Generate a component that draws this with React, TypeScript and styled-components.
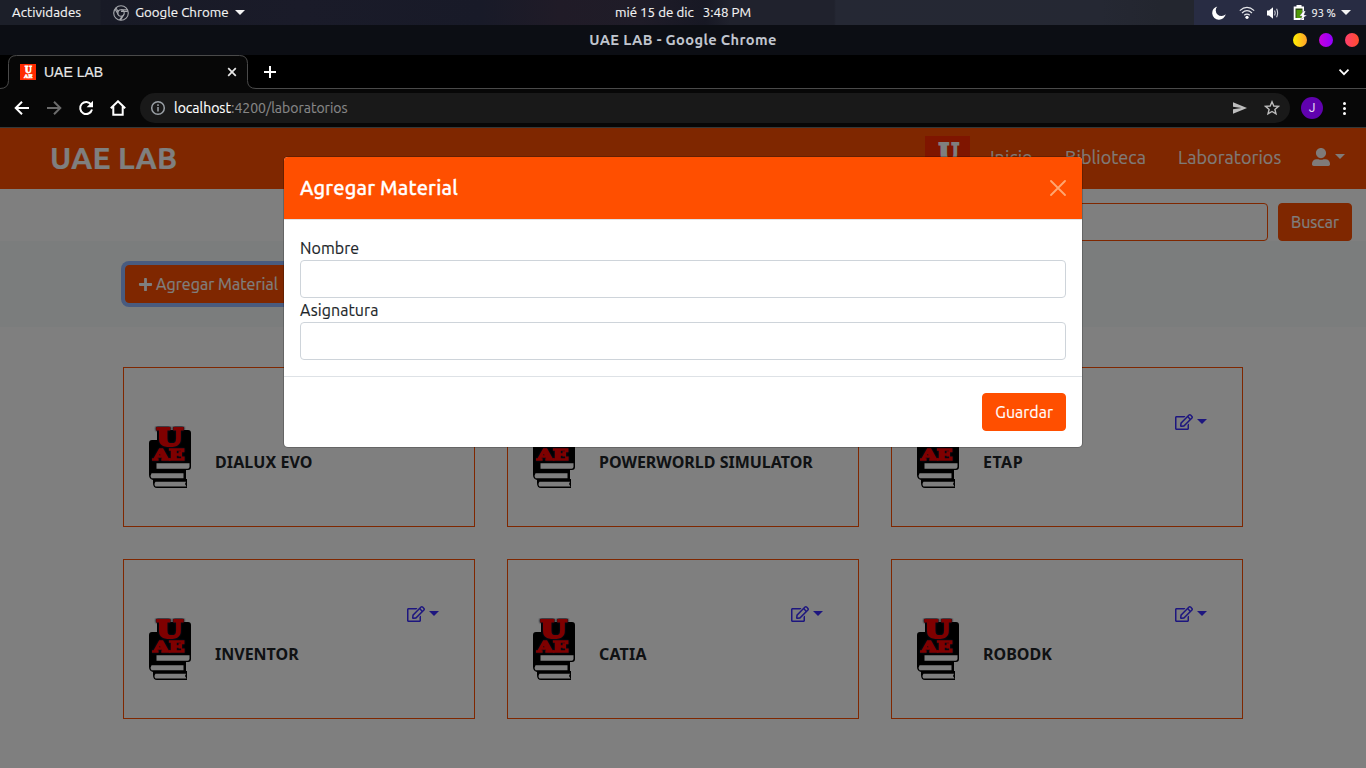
import React from 'react';
import styled, { createGlobalStyle } from 'styled-components';
import { FaPlus, FaRegEdit, FaUserAlt } from 'react-icons/fa';

const ORANGE = '#ff4f00';

const GlobalStyle = createGlobalStyle`
  *, *::before, *::after { box-sizing: border-box; }
  body { margin: 0; background: #000; font-family: Ubuntu, 'Noto Sans', sans-serif; font-size: 16px; line-height: 24px; overflow: hidden; }
  svg { display: block; flex: none; }
`;

const Screen = styled.div`
  width: 1366px;
  height: 768px;
  display: flex;
  flex-direction: column;
  overflow: hidden;
`;

const Label = styled.span<{ $track?: number; $weight?: number }>`
  letter-spacing: ${p => p.$track ?? 0}px;
  -webkit-text-stroke: ${p => p.$weight ?? 0.15}px currentColor;
  white-space: pre;
`;

/* Desktop panel */

const Panel = styled.header`
  flex: none;
  height: 25px;
  display: grid;
  grid-template-columns: 1fr auto 1fr;
  align-items: stretch;
  color: #f4f4f4;
  font-size: 13.33px;
  line-height: 24px;
  background: linear-gradient(90deg, #1c1f29 0, #1c1f29 100px, #181a26 101px, #1a1b29 300px, #181a28 480px, #201b27 560px, #1f1c28 640px, #171824 705px, #20222d 730px, #20222d 834px, #252834 836px, #252833 1100px, #23262f 1160px, #23262f 100%);
`;

const PanelLeft = styled.div`
  display: flex;
  align-items: center;
  padding-left: 12px;
`;

const AppMenu = styled.div`
  display: flex;
  align-items: center;
  margin-left: 32px;
  gap: 6px;
`;

const Clock = styled.div`
  display: flex;
  align-items: center;
  gap: 9px;
`;

const Tray = styled.div`
  justify-self: end;
  width: 172px;
  padding-left: 18px;
  display: flex;
  align-items: center;
  gap: 12.5px;
  background: #282c43;
`;

const Battery = styled.div`
  display: flex;
  align-items: center;
  gap: 5px;
  font-size: 11px;
`;

const Triangle = styled.i<{ $size: number }>`
  width: 0;
  height: 0;
  flex: none;
  border-top: ${p => p.$size}px solid currentColor;
  border-left: ${p => p.$size}px solid transparent;
  border-right: ${p => p.$size}px solid transparent;
`;

/* Browser window */

const TitleBar = styled.div`
  flex: none;
  height: 30px;
  padding-right: 7px;
  padding-left: 7px;
  display: grid;
  grid-template-columns: 1fr auto 1fr;
  align-items: center;
  background: #0c0e14;
  color: #c0c5ce;
  font-size: 14.67px;
  font-weight: 700;
`;

const WindowTitle = styled.div`
  grid-column: 2;
`;

const WindowButtons = styled.div`
  justify-self: end;
  display: flex;
  gap: 12px;
`;

const Dot = styled.span<{ $from: string; $to: string }>`
  width: 14px;
  height: 14px;
  border-radius: 50%;
  background: linear-gradient(90deg, ${p => p.$from}, ${p => p.$to});
`;

const TabStrip = styled.div`
  flex: none;
  height: 34px;
  display: flex;
  background: #000;
`;

const Tab = styled.div`
  position: relative;
  width: 256px;
  padding: 0 18px 0 20px;
  display: flex;
  align-items: center;
  font: 14px/24px 'Liberation Sans', sans-serif;
  color: #e8e8e8;

  > * { position: relative; }
  > ${Label} { margin-left: 8px; flex: 1; }
`;

const TabOutline = styled.svg`
  && { position: absolute; left: 0; top: 0; }
`;

const StripRest = styled.div`
  flex: 1;
  display: flex;
  align-items: center;
  justify-content: space-between;
  padding: 0 16px 0 7px;
  border-bottom: 1px solid #4a4a4a;
`;

const Toolbar = styled.div`
  flex: none;
  height: 39px;
  padding: 0 15px 0 14px;
  display: flex;
  align-items: center;
  background: #070707;
  border-bottom: 1px solid #353838;
`;

const NavButtons = styled.div`
  display: flex;
  gap: 16px;
`;

const Omnibox = styled.div`
  flex: none;
  width: 1150px;
  height: 30px;
  margin-left: 14px;
  padding: 0 10px;
  display: flex;
  align-items: center;
  border-radius: 15px;
  background: #191919;
  font-size: 14px;
  color: #878787;
`;

const Url = styled.div`
  flex: 1;
  margin-left: 8px;
`;

const Host = styled(Label)`
  color: #fff;
`;

const OmniActions = styled.div`
  display: flex;
  gap: 16px;
`;

const Avatar = styled.div`
  width: 22px;
  height: 22px;
  margin: 0 14px 0 11px;
  border-radius: 50%;
  display: flex;
  align-items: center;
  justify-content: center;
  background: #6002ae;
  color: #e9ddf3;
  font: 12px Roboto, sans-serif;
`;

/* Web page */

const Viewport = styled.div`
  position: relative;
  flex: 1;
  overflow: hidden;
  background: #fff;
  color: #212529;
`;

const Navbar = styled.nav`
  height: 61px;
  padding: 0 21px 0 50px;
  display: flex;
  align-items: center;
  justify-content: space-between;
  background: ${ORANGE};
  color: #fff;
`;

const Brand = styled.div`
  margin-bottom: 2px;
  font-size: 30.4px;
  font-weight: 700;
  line-height: 40px;
`;

const Links = styled.div`
  display: flex;
  align-items: center;
  font-size: 18px;
  color: rgba(255, 255, 255, 0.95);
`;

const NavLink = styled(Label)<{ $width: number }>`
  width: ${p => p.$width}px;
  margin-right: 30px;
  margin-bottom: 4px;
`;

const LogoSlot = styled.div`
  margin-right: 20px;
`;

const UserMenu = styled.div`
  display: flex;
  align-items: center;
  gap: 5px;
  margin-bottom: 4px;
`;

const SearchRow = styled.div`
  height: 52px;
  padding: 14px 14px 0;
  display: flex;
  justify-content: flex-end;
  gap: 10px;
`;

const SearchInput = styled.div`
  width: 360px;
  height: 38px;
  border: 1px solid ${ORANGE};
  border-radius: 4px;
`;

const Button = styled.button<{ $focused?: boolean }>`
  height: 38px;
  padding: 0 12px;
  border: 1px solid ${ORANGE};
  border-radius: 4px;
  display: flex;
  align-items: center;
  gap: 3px;
  background: ${ORANGE};
  color: #fff;
  font: inherit;
  box-shadow: ${p => (p.$focused ? '0 0 0 4px #92b6ff' : 'none')};
`;

const ActionBand = styled.section`
  height: 86px;
  padding: 24px 125px;
  display: flex;
  background: #f7fbfa;
`;

const CardGrid = styled.main`
  width: 1120px;
  margin: 40px auto 0;
  display: grid;
  grid-template-columns: repeat(3, 352px);
  gap: 32px;
`;

const Card = styled.article`
  height: 160px;
  padding: 45px 35px 0 25px;
  display: flex;
  align-items: flex-start;
  border: 1px solid ${ORANGE};
`;

const BookSlot = styled.div`
  flex: none;
  margin-top: 13px;
  width: 66px;
`;

const CardTitle = styled.h6`
  flex: 1;
  min-width: 0;
  margin: 37px 0 0;
  font: 700 16px/24px 'Noto Sans', sans-serif;
  white-space: nowrap;
`;

const EditMenu = styled.div`
  display: flex;
  gap: 4px;
  color: #3a2cff;

  > i { margin-top: 6px; }
`;

const Backdrop = styled.div`
  position: absolute;
  inset: 0;
  padding-top: 28px;
  background: rgba(0, 0, 0, 0.5);
`;

const Modal = styled.div`
  width: 800px;
  margin: 0 auto;
  border: 1px solid rgba(0, 0, 0, 0.2);
  border-radius: 5px;
  background: #fff;
  background-clip: padding-box;
  overflow: hidden;
`;

const ModalHeader = styled.div`
  height: 63px;
  padding: 0 16px;
  display: flex;
  align-items: center;
  justify-content: space-between;
  background: ${ORANGE};
  background-clip: padding-box;
  border-bottom: 1px solid #dee2e6;
  color: #fff;
  font-size: 20px;
  font-weight: 500;
`;

const ModalBody = styled.div`
  padding: 16px;
  display: flex;
  flex-direction: column;
`;

const Field = styled.label`
  display: flex;
  flex-direction: column;
`;

const TextInput = styled.input`
  height: 38px;
  border: 1px solid #ced4da;
  border-radius: 4px;
  background: #fff;
`;

const ModalFooter = styled.div`
  padding: 16px;
  display: flex;
  justify-content: flex-end;
  border-top: 1px solid #dee2e6;
`;

const SLAB = "'DejaVu Serif', serif";

const Emblem = ({ size }: { size: number }) => (
  <svg width={size} height={size} viewBox="0 0 45 45">
    <rect width="45" height="45" fill="#ff2a00" />
    <g fill="#fff" stroke="#fff" fontFamily={SLAB} fontWeight="700">
      <text x="13.700" y="25" fontSize="24.500" strokeWidth="2.200" textLength="20" lengthAdjust="spacingAndGlyphs">U</text>
      <text x="11" y="38" fontSize="13" strokeWidth="1.500" textLength="24" lengthAdjust="spacingAndGlyphs">AE</text>
    </g>
  </svg>
);

const BookLetters = styled.g`
  fill: #f00;
  stroke: #f00;
  font-family: ${SLAB};
  font-weight: 700;
  filter: drop-shadow(0 0 0.8px #10162c) drop-shadow(0 0 0.5px #10162c);
`;

const Book = () => (
  <svg width="42" height="63" viewBox="0 0 42 63">
    <path d="M8 4h31q3 0 3 3v34q0 3-3 3h-2v9h1v9H8q-4 0-4-5v-3q-4-1-4-5V17q0-3 3-3h5z" fill="#000" />
    <path d="M7.500 37.300h33v3.400q0 2-2 2h-31z" fill="#fff" />
    <path d="M2.500 47.200h32v5h-32q-1.800-2.500 0-5z" fill="#fff" />
    <path d="M6.500 55.700h30.500l-1 2.300 1.500 2.600h-31q-2-2.400 0-4.900z" fill="#fff" />
    <BookLetters>
      <text x="7.500" y="19.700" fontSize="25" strokeWidth="2.200" textLength="26.500" lengthAdjust="spacingAndGlyphs">U</text>
      <text x="4.200" y="34" fontSize="14.500" strokeWidth="1.500" textLength="31.500" lengthAdjust="spacingAndGlyphs">AE</text>
    </BookLetters>
  </svg>
);

const ChromeIcon = () => (
  <svg width="16" height="16" viewBox="0 0 16 16" fill="none" stroke="#a5a7ac" strokeWidth="1.100">
    <circle cx="8" cy="8" r="7.300" />
    <circle cx="8" cy="8" r="3.200" />
    <path d="M8 4.800h6.500M5.200 9.600 2 4M10.800 9.600 7.600 15.200M2.900 2.800l2.500 4.400M8 6.400h6.800M9.200 11 6.500 15" />
  </svg>
);

const MoonIcon = () => (
  <svg width="14" height="14" viewBox="0 0 14 14" fill="#fff">
    <path d="M5.300.4A6.800 6.800 0 1 0 13.700 8.300 4.700 4.700 0 1 1 5.300.4z" />
  </svg>
);

const WifiIcon = () => (
  <svg width="16" height="14" viewBox="0 0 16 14" fill="none" stroke="#e6e7eb" strokeWidth="1.200">
    <path d="M.8 4.600Q8-1.800 15.200 4.600" />
    <path d="M3 7Q8 2.400 13 7" />
    <path d="M5.200 9.300Q8 6.900 10.800 9.300" />
    <circle cx="8" cy="11.300" r="1.600" fill="#fff" stroke="none" />
  </svg>
);

const VolumeIcon = () => (
  <svg width="13" height="12" viewBox="0 0 13 12">
    <path d="M0 3.500h2L6 .3v11.400L2 8.500H0z" fill="#fff" />
    <path d="M7.600 3.500q1.300 2.500 0 5M9.600 1.800q2 4.200 0 8.400" fill="none" stroke="#d0d2da" strokeWidth="1.100" />
  </svg>
);

const BatteryIcon = () => (
  <svg width="14" height="15" viewBox="0 0 14 15">
    <path d="M3.500 0h5v1.500H11V15H.7V1.500h2.800z" fill="#fff" />
    <path d="M2.500 3.500h7V13h-7z" fill="#2c4a12" />
    <path d="M3.500 5h5.500v8H3.500z" fill="#4e9a06" />
    <path d="m10.500 6-4 5H9L7.500 15 14 10h-3l1.500-4z" fill="#fff" stroke="#282c43" strokeWidth=".3" />
  </svg>
);

const line = { fill: 'none', stroke: '#fff', strokeWidth: 2 };

const BackIcon = ({ color }: { color: string }) => (
  <svg width="16" height="16" viewBox="0 0 16 16" {...line} stroke={color}>
    <path d="M15 8H2.500M8 1.700 1.700 8 8 14.300" />
  </svg>
);

const ForwardIcon = ({ color }: { color: string }) => (
  <svg width="16" height="16" viewBox="0 0 16 16" {...line} stroke={color}>
    <path d="M1 8h12.500M8 1.700 14.300 8 8 14.300" />
  </svg>
);

const ReloadIcon = () => (
  <svg width="16" height="16" viewBox="0 0 16 16">
    <path d="M13.200 4.700A6 6 0 1 0 14 9.500" {...line} />
    <path d="M15 .8v6.400H8.600z" fill="#fff" />
  </svg>
);

const HomeIcon = () => (
  <svg width="16" height="16" viewBox="0 0 16 16" {...line}>
    <path d="M.8 8.300 8 1.300l7.200 7M3.300 6.500v8.200h9.400V6.500" />
  </svg>
);

const InfoIcon = () => (
  <svg width="16" height="16" viewBox="0 0 16 16" fill="none" stroke="#9aa0a6" strokeWidth="1.500">
    <circle cx="8" cy="8" r="6.300" />
    <path d="M8 7v4.500M8 4.300v1.600" />
  </svg>
);

const SendIcon = () => (
  <svg width="16" height="16" viewBox="0 0 16 16" fill="#bdbdbd">
    <path d="M1 2.200 15 8 1 13.800V9.300L9.500 8 1 6.700z" />
  </svg>
);

const StarIcon = () => (
  <svg width="16" height="16" viewBox="0 0 16 16" fill="none" stroke="#bdbdbd" strokeWidth="1.400">
    <path d="m8 1.800 1.800 4.200 4.600.4-3.500 3 1.100 4.500L8 11.500l-4 2.400 1.100-4.500-3.500-3 4.600-.4z" />
  </svg>
);

const cards = [
  { title: 'DIALUX EVO', track: 0.1 },
  { title: 'POWERWORLD SIMULATOR', track: 0 },
  { title: 'ETAP', track: 0.5 },
  { title: 'INVENTOR', track: 0 },
  { title: 'CATIA', track: 0.2 },
  { title: 'ROBODK', track: 0 },
];

const Desktop = () => (
  <Panel>
    <PanelLeft>
      <Label $track={0.05}>Actividades</Label>
      <AppMenu>
        <ChromeIcon />
        <Label>Google Chrome</Label>
        <Triangle $size={5} />
      </AppMenu>
    </PanelLeft>
    <Clock>
      <Label>mié 15 de dic</Label>
      <Label>3:48 PM</Label>
    </Clock>
    <Tray>
      <MoonIcon />
      <WifiIcon />
      <VolumeIcon />
      <Battery>
        <BatteryIcon />
        <Label>93 %</Label>
        <Triangle $size={5} />
      </Battery>
    </Tray>
  </Panel>
);

const Browser = () => (
  <>
    <TitleBar>
      <WindowTitle><Label $track={0.35} $weight={0}>UAE LAB - Google Chrome</Label></WindowTitle>
      <WindowButtons>
        <Dot $from="#fff000" $to="#ffa02c" />
        <Dot $from="#c800dc" $to="#9000ff" />
        <Dot $from="#ff3f6e" $to="#ff4d2c" />
      </WindowButtons>
    </TitleBar>
    <TabStrip>
      <Tab>
        <TabOutline width="256" height="34" viewBox="0 0 256 34">
          <path d="M0 33.500q8.500 0 8.500-8V8.500q0-8 8-8h223q8 0 8 8v17q0 8 8.500 8V34H0z" fill="#070707" />
          <path d="M0 33.500q8.500 0 8.500-8V8.500q0-8 8-8h223q8 0 8 8v17q0 8 8.500 8" fill="none" stroke="#4a4a4a" />
        </TabOutline>
        <Emblem size={16} />
        <Label>UAE LAB</Label>
        <svg width="12" height="12" viewBox="0 0 12 12" fill="none" stroke="#e8e8e8" strokeWidth="1.700">
          <path d="m2.200 2.200 7.600 7.600M9.800 2.200 2.200 9.800" />
        </svg>
      </Tab>
      <StripRest>
        <svg width="14" height="14" viewBox="0 0 14 14" {...line}><path d="M7 1v12M1 7h12" /></svg>
        <svg width="12" height="12" viewBox="0 0 12 12" {...line} strokeWidth="1.700"><path d="m1.500 3.700 4.500 4.500 4.500-4.500" /></svg>
      </StripRest>
    </TabStrip>
    <Toolbar>
      <NavButtons>
        <BackIcon color="#fff" />
        <ForwardIcon color="#6b6b6b" />
        <ReloadIcon />
        <HomeIcon />
      </NavButtons>
      <Omnibox>
        <InfoIcon />
        <Url>
          <Host>localhost</Host>
          <Label>:4200/laboratorios</Label>
        </Url>
        <OmniActions>
          <SendIcon />
          <StarIcon />
        </OmniActions>
      </Omnibox>
      <Avatar>J</Avatar>
      <svg width="14" height="14" viewBox="0 0 14 14" fill="#fff">
        <circle cx="7.500" cy="2.500" r="1.500" /><circle cx="7.500" cy="7.500" r="1.500" /><circle cx="7.500" cy="12.500" r="1.500" />
      </svg>
    </Toolbar>
  </>
);

const AddMaterialDialog = () => (
  <Backdrop>
    <Modal role="dialog">
      <ModalHeader>
        <Label $track={0.17} $weight={0.3}>Agregar Material</Label>
        <svg width="16" height="16" viewBox="0 0 16 16" fill="none" stroke="#ffa770" strokeWidth="1.800" strokeLinecap="round">
          <path d="m1 1 14 14M15 1 1 15" />
        </svg>
      </ModalHeader>
      <ModalBody>
        <Field>
          <Label $track={0.05}>Nombre</Label>
          <TextInput />
        </Field>
        <Field>
          <Label $track={0.08}>Asignatura</Label>
          <TextInput />
        </Field>
      </ModalBody>
      <ModalFooter>
        <Button><Label>Guardar</Label></Button>
      </ModalFooter>
    </Modal>
  </Backdrop>
);

export default function App() {
  return (
    <Screen>
      <GlobalStyle />
      <Desktop />
      <Browser />
      <Viewport>
        <Navbar>
          <Brand><Label $track={0.1}>UAE LAB</Label></Brand>
          <Links>
            <LogoSlot><Emblem size={45} /></LogoSlot>
            <NavLink $width={45}>Inicio</NavLink>
            <NavLink $width={83} $track={0.05}>Biblioteca</NavLink>
            <NavLink $width={104} $track={0.05}>Laboratorios</NavLink>
            <UserMenu>
              <FaUserAlt size={18} />
              <Triangle $size={5} />
            </UserMenu>
          </Links>
        </Navbar>
        <SearchRow>
          <SearchInput />
          <Button><Label>Buscar</Label></Button>
        </SearchRow>
        <ActionBand>
          <Button $focused>
            <FaPlus size={15} />
            <Label $track={0.05}>Agregar Material</Label>
          </Button>
        </ActionBand>
        <CardGrid>
          {cards.map(({ title, track }) => (
            <Card key={title}>
              <BookSlot><Book /></BookSlot>
              <CardTitle><Label $track={track} $weight={0}>{title}</Label></CardTitle>
              <EditMenu>
                <FaRegEdit size={18} />
                <Triangle $size={5} />
              </EditMenu>
            </Card>
          ))}
        </CardGrid>
        <AddMaterialDialog />
      </Viewport>
    </Screen>
  );
}
